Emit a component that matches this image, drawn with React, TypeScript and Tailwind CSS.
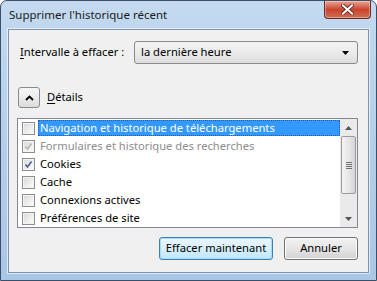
import { useState } from "react";

type Item = {
  label: string;
  checked: boolean;
  disabled?: boolean;
};

const items: Item[] = [
  { label: "Navigation et historique de téléchargements", checked: false },
  { label: "Formulaires et historique des recherches", checked: true, disabled: true },
  { label: "Cookies", checked: true },
  { label: "Cache", checked: false },
  { label: "Connexions actives", checked: false },
  { label: "Préférences de site", checked: false }
];

function CheckBox({ checked, disabled }: { checked: boolean; disabled?: boolean }) {
  return (
    <span className="flex h-[13px] w-[13px] shrink-0 items-center justify-center border border-[#8e8f8f] bg-white">
      <span className="flex h-[11px] w-[11px] items-center justify-center border border-[#f4f4f4] bg-gradient-to-br from-[#dcdcdc] to-[#fbfbfb]">
        {checked ? (
          <svg width="9" height="9" viewBox="0 0 9 9">
            <path
              d="M1.5 4.5 L3.5 7 L7.5 1.5"
              fill="none"
              stroke={disabled ? "#b5b5b5" : "#4a5f97"}
              strokeWidth="1.6"
            />
          </svg>
        ) : null}
      </span>
    </span>
  );
}

function DropArrow() {
  return (
    <svg width="7" height="4" viewBox="0 0 7 4">
      <path d="M0 0 H7 L3.5 4 Z" fill="#000" />
    </svg>
  );
}

export default function App() {
  const [selected] = useState(0);

  return (
    <div
      className="flex h-[281px] w-[377px] flex-col overflow-hidden rounded-t-[7px] border border-[#3d4f66] bg-gradient-to-b from-[#c3daf0] via-[#b3cfea] to-[#a9c7e6] text-[11.2px] text-black"
      style={{ fontFamily: '"Noto Sans", "Open Sans", sans-serif' }}
    >
      <div className="flex h-[28px] shrink-0 items-start justify-between">
        <div className="pl-[8px] pt-[6px] text-[11.5px] leading-[16px] text-[#1a1a1a]">
          Supprimer l'historique récent
        </div>
        <div className="mr-[5px] flex h-[18px] w-[47px] items-center justify-center rounded-b-[4px] border border-t-0 border-[#6b2b25] bg-gradient-to-b from-[#e8a493] via-[#c9432e] to-[#d46b52] shadow-[inset_0_0_0_1px_rgba(255,255,255,0.35)]">
          <svg width="13" height="11" viewBox="0 0 13 11">
            <path
              d="M2 1.5 L11 9.5 M11 1.5 L2 9.5"
              stroke="#4a1410"
              strokeWidth="3.6"
              strokeLinecap="square"
            />
            <path
              d="M2 1.5 L11 9.5 M11 1.5 L2 9.5"
              stroke="#ffffff"
              strokeWidth="2.2"
              strokeLinecap="square"
            />
          </svg>
        </div>
      </div>

      <div className="mx-[7px] mb-[7px] flex flex-1 flex-col border border-[#7f93ac] bg-[#f0f0f0] shadow-[0_0_0_1px_rgba(255,255,255,0.6)]">
        <div className="ml-[11px] mr-[10px] mt-[11px] flex items-center">
          <span className="w-[114px]">
            <span className="underline underline-offset-2">I</span>ntervalle à effacer :
          </span>
          <div className="flex h-[23px] flex-1 items-center justify-between rounded-[3px] border border-[#8a8a8a] bg-gradient-to-b from-[#f3f3f3] via-[#ebebeb] to-[#dcdcdc] pl-[6px] pr-[8px]">
            <span>la dernière heure</span>
            <DropArrow />
          </div>
        </div>

        <div className="ml-[9px] mt-[23px] flex items-center gap-[7px]">
          <div className="flex h-[21px] w-[22px] items-center justify-center rounded-[3px] border border-[#8a8a8a] bg-gradient-to-b from-[#f6f6f6] via-[#ececec] to-[#dadada]">
            <svg width="9" height="6" viewBox="0 0 9 6">
              <path d="M1 5 L4.5 1.5 L8 5" fill="none" stroke="#000" strokeWidth="1.8" />
            </svg>
          </div>
          <span>
            <span className="underline underline-offset-2">D</span>étails
          </span>
        </div>

        <div className="ml-[8px] mr-[10px] mt-[10px] flex h-[110px] border border-[#828790] bg-white">
          <div className="flex-1 overflow-hidden">
            {items.map((item, index) => (
              <div key={item.label} className="flex h-[18px] items-center pl-[4px]">
                <CheckBox checked={item.checked} disabled={item.disabled} />
                <span
                  className={
                    index === selected
                      ? "ml-[3px] flex h-[16px] flex-1 items-center border border-dotted border-[#1e5fa8] bg-[#3399ff] pl-[1px] text-white"
                      : item.disabled
                        ? "ml-[3px] pl-[2px] text-[#8d8d8d]"
                        : "ml-[3px] pl-[2px]"
                  }
                >
                  {item.label}
                </span>
              </div>
            ))}
          </div>
          <div className="flex w-[17px] flex-col bg-[#eaeaea]">
            <div className="flex h-[17px] items-center justify-center">
              <svg width="7" height="4" viewBox="0 0 7 4">
                <path d="M0 4 H7 L3.5 0 Z" fill="#555" />
              </svg>
            </div>
            <div className="mx-[1px] flex h-[58px] items-center justify-center rounded-[2px] border border-[#9c9c9c] bg-gradient-to-r from-[#f4f4f4] via-[#e6e6e6] to-[#d4d4d4]">
              <div className="flex flex-col gap-[1px]">
                <span className="h-px w-[6px] bg-[#6f6f6f]" />
                <span className="h-px w-[6px] bg-[#6f6f6f]" />
                <span className="h-px w-[6px] bg-[#6f6f6f]" />
                <span className="h-px w-[6px] bg-[#6f6f6f]" />
              </div>
            </div>
            <div className="flex-1" />
            <div className="flex h-[17px] items-center justify-center">
              <svg width="7" height="4" viewBox="0 0 7 4">
                <path d="M0 0 H7 L3.5 4 Z" fill="#555" />
              </svg>
            </div>
          </div>
        </div>

        <div className="mr-[10px] mt-[9px] flex justify-end gap-[11px]">
          <button className="h-[23px] w-[114px] rounded-[3px] border border-[#3c7fb1] bg-gradient-to-b from-[#eaf6fd] via-[#d9f0fc] to-[#bee6fd] shadow-[inset_0_0_0_1px_#a8dbf6]">
            Effacer maintenant
          </button>
          <button className="h-[23px] w-[74px] rounded-[3px] border border-[#707070] bg-gradient-to-b from-[#f2f2f2] via-[#e6e6e6] to-[#d2d2d2] shadow-[inset_0_0_0_1px_#fcfcfc]">
            Annuler
          </button>
        </div>
      </div>
    </div>
  );
}
